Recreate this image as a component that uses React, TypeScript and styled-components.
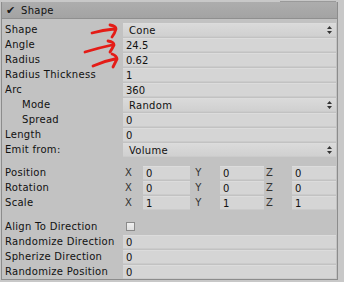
import React from "react";
import styled, { createGlobalStyle } from "styled-components";

const Global = createGlobalStyle`
  html, body { margin: 0; padding: 0; background: #c8c8c8; }
  body { font-family: "DejaVu Sans", "Liberation Sans", sans-serif; font-size: 10px; color: #111; }
`;

const Page = styled.div`
  position: relative;
  width: 344px;
  height: 282px;
  overflow: hidden;
  background: #c8c8c8;
`;

const TopStrip = styled.div`
  height: 2px;
  display: flex;
  justify-content: flex-end;
  padding-right: 8px;
`;

const TopLine = styled.div`
  width: 56px;
  height: 1px;
  margin-top: 1px;
  background: #9a9a9a;
`;

const Frame = styled.div`
  box-sizing: border-box;
  margin-left: 1px;
  width: 337px;
  border-left: 1px solid #8c8c8c;
  border-right: 1px solid #8c8c8c;
  border-bottom: 1px solid #8c8c8c;
  background: #c2c2c2;
`;

const Header = styled.div`
  height: 17px;
  display: flex;
  align-items: center;
  background: linear-gradient(#adadad, #a3a3a3);
  border-bottom: 1px solid #8f8f8f;
  box-sizing: border-box;
  padding-left: 4px;
`;

const Check = styled.span`
  font-size: 11px;
  width: 15px;
  color: #1a1a1a;
`;

const HeaderTitle = styled.span`
  font-size: 10px;
  letter-spacing: 0.3px;
`;

const Body = styled.div`
  padding: 3px 1px 0 0;
`;

const Row = styled.div<{ $gapTop?: number }>`
  display: flex;
  height: 15px;
  align-items: center;
  margin-top: ${(p) => p.$gapTop ?? 0}px;
`;

const Label = styled.div<{ $indent?: boolean }>`
  width: 121px;
  box-sizing: border-box;
  padding-left: ${(p) => (p.$indent ? 20 : 3)}px;
  white-space: nowrap;
  letter-spacing: 0.3px;
`;

const Field = styled.div`
  flex: 1;
  height: 14px;
  margin-top: 1px;
  box-sizing: border-box;
  padding-left: 3px;
  display: flex;
  align-items: center;
  background: #d5d5d5;
  border-top: 1px solid #dcdcdc;
  border-bottom: 1px solid #cbcbcb;
`;

const Popup = styled(Field)`
  padding-left: 6px;
  padding-right: 4px;
  justify-content: space-between;
  letter-spacing: 0.3px;
  background: linear-gradient(#dadada, #d0d0d0);
`;

const Vector = styled.div`
  flex: 1;
  display: grid;
  grid-template-columns: 20px 47px 30px 44px 28px 44px;
  align-items: center;
`;

const Axis = styled.span`
  padding-left: 2px;
  color: #333;
`;

const CheckBox = styled.div`
  width: 9px;
  height: 9px;
  box-sizing: border-box;
  margin-left: 3px;
  border: 1px solid #8a8a8a;
  background: linear-gradient(#efefef, #dedede);
`;

const Marks = styled.svg`
  position: absolute;
  left: 0;
  top: 0;
  pointer-events: none;
`;

const UpDown = () => (
  <svg width="5" height="8" viewBox="0 0 5 8">
    <path d="M2.5 0 L5 3 L0 3 Z M0 5 L5 5 L2.5 8 Z" fill="#333" />
  </svg>
);

const NumRow = ({ label, value, indent }: { label: string; value: string; indent?: boolean }) => (
  <Row>
    <Label $indent={indent}>{label}</Label>
    <Field>{value}</Field>
  </Row>
);

const PopRow = ({ label, value, indent }: { label: string; value: string; indent?: boolean }) => (
  <Row>
    <Label $indent={indent}>{label}</Label>
    <Popup>
      <span>{value}</span>
      <UpDown />
    </Popup>
  </Row>
);

const VecRow = ({ label, v, gapTop }: { label: string; v: [string, string, string]; gapTop?: number }) => (
  <Row $gapTop={gapTop}>
    <Label>{label}</Label>
    <Vector>
      <Axis>X</Axis>
      <Field>{v[0]}</Field>
      <Axis>&nbsp;Y</Axis>
      <Field>{v[1]}</Field>
      <Axis>Z</Axis>
      <Field>{v[2]}</Field>
    </Vector>
  </Row>
);

export default function App() {
  return (
    <Page>
      <Global />
      <TopStrip>
        <TopLine />
      </TopStrip>
      <Frame>
        <Header>
          <Check>✔</Check>
          <HeaderTitle>Shape</HeaderTitle>
        </Header>
        <Body>
          <PopRow label="Shape" value="Cone" />
          <NumRow label="Angle" value="24.5" />
          <NumRow label="Radius" value="0.62" />
          <NumRow label="Radius Thickness" value="1" />
          <NumRow label="Arc" value="360" />
          <PopRow label="Mode" value="Random" indent />
          <NumRow label="Spread" value="0" indent />
          <NumRow label="Length" value="0" />
          <PopRow label="Emit from:" value="Volume" />
          <VecRow label="Position" v={["0", "0", "0"]} gapTop={8} />
          <VecRow label="Rotation" v={["0", "0", "0"]} />
          <VecRow label="Scale" v={["1", "1", "1"]} />
          <Row $gapTop={9}>
            <Label>Align To Direction</Label>
            <CheckBox />
          </Row>
          <NumRow label="Randomize Direction" value="0" />
          <NumRow label="Spherize Direction" value="0" />
          <NumRow label="Randomize Position" value="0" />
        </Body>
      </Frame>
      <Marks width="344" height="282" viewBox="0 0 344 282">
        <g fill="none" stroke="#e41c17" strokeWidth="2.8" strokeLinecap="round" strokeLinejoin="round">
          <path d="M92 33 Q103 30 114 29 M110 25 Q116 26 116 29 Q115 33 112 37" />
          <path d="M85 52 Q98 48 112 45 M108 41 Q114 42 114 45 Q112 49 110 52" />
          <path d="M93 66 Q104 61 115 59 M112 54 Q117 56 117 59 Q115 63 113 67" />
        </g>
      </Marks>
    </Page>
  );
}
